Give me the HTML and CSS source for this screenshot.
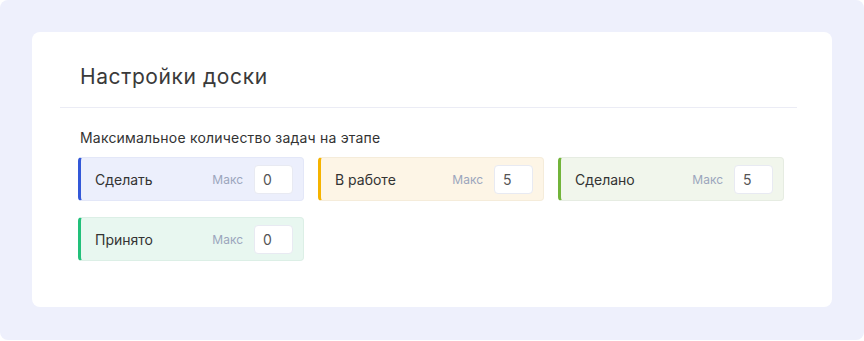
FILE: index.html
```html
<!DOCTYPE html>
<html lang="ru">
<head>
    <meta charset="UTF-8">
    <meta name="viewport" content="width=device-width, initial-scale=1.0">
    <title>Настройки доски</title>
    <link rel="stylesheet" href="styles.css">
</head>
<body>
    <div class="frame">
        <div class="panel">
            <div class="panel-header">
                <h1>Настройки доски</h1>
            </div>

            <div class="panel-body">
                <div class="section-title">Максимальное количество задач на этапе</div>

                <div class="stages">
                    <div class="stage stage-todo">
                        <span class="stage-name">Сделать</span>
                        <label class="stage-max" for="max-todo">Макс</label>
                        <input type="text" id="max-todo" value="0">
                    </div>

                    <div class="stage stage-progress">
                        <span class="stage-name">В работе</span>
                        <label class="stage-max" for="max-progress">Макс</label>
                        <input type="text" id="max-progress" value="5">
                    </div>

                    <div class="stage stage-done">
                        <span class="stage-name">Сделано</span>
                        <label class="stage-max" for="max-done">Макс</label>
                        <input type="text" id="max-done" value="5">
                    </div>

                    <div class="stage stage-accepted">
                        <span class="stage-name">Принято</span>
                        <label class="stage-max" for="max-accepted">Макс</label>
                        <input type="text" id="max-accepted" value="0">
                    </div>
                </div>
            </div>
        </div>
    </div>
</body>
</html>
```

FILE: styles.css
```css
html, body {
    margin: 0;
    padding: 0;
    background-color: #ffffff;
}

body {
    font-family: Inter, 'Noto Sans', sans-serif;
    color: #333333;
}

.frame {
    background-color: #eef0fc;
    border-radius: 8px;
    padding: 32px;
    height: 340px;
    box-sizing: border-box;
}

.panel {
    background-color: #ffffff;
    border-radius: 8px;
    height: 275px;
    box-sizing: border-box;
}

.panel-header {
    margin: 0 35px 0 28px;
    padding: 33px 0 18px 20px;
    border-bottom: 1px solid #ebecf5;
}

h1 {
    margin: 0;
    font-size: 21px;
    line-height: 24px;
    font-weight: 400;
    letter-spacing: 0.6px;
    color: #3a3a3a;
}

.panel-body {
    padding: 20px 46px 0 46px;
}

.section-title {
    font-size: 14px;
    line-height: 20px;
    letter-spacing: 0.2px;
    color: #333333;
    padding-left: 2px;
    margin-bottom: 9px;
}

.stages {
    display: grid;
    grid-template-columns: repeat(3, 226px);
    column-gap: 14px;
    row-gap: 16px;
}

.stage {
    display: flex;
    align-items: center;
    height: 44px;
    box-sizing: border-box;
    padding: 0 10px 0 14px;
    border: 1px solid transparent;
    border-left: 3px solid;
    border-radius: 4px;
}

.stage-name {
    flex: 1;
    font-size: 14px;
    color: #333333;
}

.stage-max {
    font-size: 12px;
    color: #9ba6bd;
    margin-right: 11px;
}

.stage input {
    width: 39px;
    height: 29px;
    box-sizing: border-box;
    border: 1px solid #e8eaf2;
    border-radius: 4px;
    background-color: #ffffff;
    padding: 0 0 0 8px;
    font-family: Inter, 'Noto Sans', sans-serif;
    font-size: 14px;
    color: #555555;
    outline: none;
}

.stage-todo {
    background-color: #eceffc;
    border-color: #e3e7f8;
    border-left-color: #3358d8;
}

.stage-progress {
    background-color: #fdf5e6;
    border-color: #f5ecda;
    border-left-color: #f5b300;
}

.stage-done {
    background-color: #f1f6ec;
    border-color: #e6ece2;
    border-left-color: #72b43a;
}

.stage-accepted {
    background-color: #e8f7f0;
    border-color: #dcefe6;
    border-left-color: #22c07a;
}
```
